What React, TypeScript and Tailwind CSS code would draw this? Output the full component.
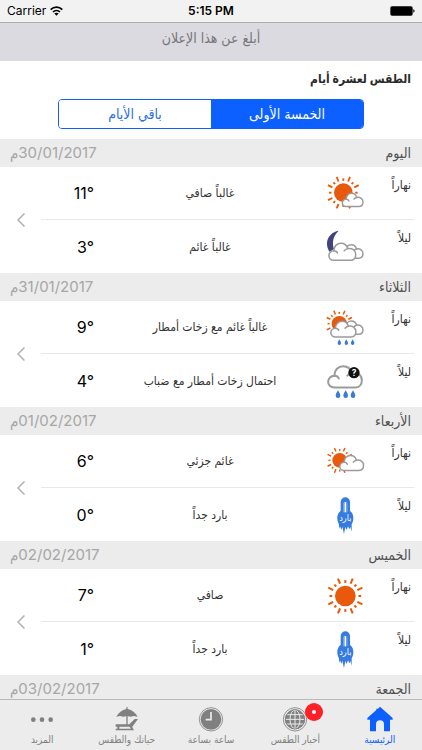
import type { ReactNode } from "react"

type IconName = "partly" | "nightCloud" | "sunRain" | "fogRain" | "sunCloud" | "cold" | "sunny"

type Period = { label: string; icon: IconName; text: string; temp: string }

const days: { name: string; date: string; periods: Period[] }[] = [
  {
    name: "اليوم",
    date: "30/01/2017م",
    periods: [
      { label: "نهاراً", icon: "partly", text: "غالباً صافي", temp: "11°" },
      { label: "ليلاً", icon: "nightCloud", text: "غالباً غائم", temp: "3°" },
    ],
  },
  {
    name: "الثلاثاء",
    date: "31/01/2017م",
    periods: [
      { label: "نهاراً", icon: "sunRain", text: "غالباً غائم مع زخات أمطار", temp: "9°" },
      { label: "ليلاً", icon: "fogRain", text: "احتمال زخات أمطار مع ضباب", temp: "4°" },
    ],
  },
  {
    name: "الأربعاء",
    date: "01/02/2017م",
    periods: [
      { label: "نهاراً", icon: "sunCloud", text: "غائم جزئي", temp: "6°" },
      { label: "ليلاً", icon: "cold", text: "بارد جداً", temp: "0°" },
    ],
  },
  {
    name: "الخميس",
    date: "02/02/2017م",
    periods: [
      { label: "نهاراً", icon: "sunny", text: "صافي", temp: "7°" },
      { label: "ليلاً", icon: "cold", text: "بارد جداً", temp: "1°" },
    ],
  },
  { name: "الجمعة", date: "03/02/2017م", periods: [] },
]

function Sun({ x, y, r }: { x: number; y: number; r: number }) {
  return (
    <g transform={`translate(${x} ${y}) scale(${r / 30})`} stroke="#e8590c" strokeWidth="6">
      <circle r="30" fill="#e8590c" stroke="none" />
      {/* long rays */}
      {[26, 67, 113, 154, 206, 247, 293, 334].map((a) => (
        <path key={a} d="M39 0H55" transform={`rotate(${a})`} />
      ))}
      {/* short rays */}
      {[0, 46, 90, 134, 180, 226, 270, 314].map((a) => (
        <path key={a} d="M38 0H46" transform={`rotate(${a})`} />
      ))}
    </g>
  )
}

function Cloud({ x, y, w, stroke = 4.5 }: { x: number; y: number; w: number; stroke?: number }) {
  const s = w / 64
  return (
    <g
      transform={`translate(${x} ${y}) scale(${s})`}
      fill="#fff"
      stroke="#9b9b9b"
      strokeWidth={stroke / s}
      strokeLinecap="round"
    >
      <path d="M13 40C6 40 2 35 2 30C2 24 7 19 13 19C13 9 20 2 29 2C37 2 42 7 44 14C54 12 62 18 62 27C62 35 57 40 50 40Z" />
      <path d="M13 19C17 19 20 21 21 24M44 14C40 15 38 16 36 19" fill="none" />
    </g>
  )
}

function Drops({ xs, y, size }: { xs: number[]; y: number; size: number }) {
  return (
    <>
      {xs.map((x) => (
        <path
          key={x}
          transform={`translate(${x} ${y}) scale(${size / 20})`}
          d="M0 0C3 6 6 9 6 14A6 6 0 0 1 -6 14C-6 9 -3 6 0 0Z"
          fill="#3a7bd5"
        />
      ))}
    </>
  )
}

const drawings: Record<IconName, ReactNode> = {
  partly: (
    <>
      <Sun x={52} y={53} r={28} />
      <Cloud x={47} y={53} w={66} />
    </>
  ),
  nightCloud: (
    <>
      <path d="M38 5C20 8 3 22 3 44C3 54 6 60 10 68L24 60C18 42 20 22 38 5Z" fill="#43437c" />
      <Cloud x={45} y={45} w={68} />
      <Cloud x={6} y={40} w={86} />
    </>
  ),
  sunRain: (
    <>
      <Sun x={40} y={44} r={23} />
      <Cloud x={46} y={34} w={67} />
      <Cloud x={12} y={34} w={80} />
      <Drops xs={[40, 61, 80]} y={91} size={17} />
    </>
  ),
  fogRain: (
    <>
      <Cloud x={3} y={6} w={108} stroke={6} />
      <circle cx="84" cy="29" r="17" fill="#111" />
      <text x="84" y="38" textAnchor="middle" fontSize="25" fontWeight="bold" fill="#fff">?</text>
      <Drops xs={[36, 59, 81]} y={82} size={23} />
    </>
  ),
  sunCloud: (
    <>
      <Sun x={41} y={52} r={22} />
      <Cloud x={39} y={35} w={76} />
    </>
  ),
  cold: (
    <>
      <path
        d="M44 15A14 14 0 0 1 72 15V42C79 47 82 54 82 63C82 71 80 77 77 82V104L73 90L70 97L66 88L62 99L58 90L54 111L49 90L46 98L42 88L39 96V82C36 77 34 71 34 63C34 54 37 47 44 42Z"
        fill="#357be0"
      />
      <path d="M58 15V46" stroke="#fff" strokeWidth="5" />
      <path d="M53 17V46M63 17V46" stroke="#9fc3f5" strokeWidth="2" />
      <text x="58" y="72" textAnchor="middle" fontSize="27" fill="#fff">بارد</text>
    </>
  ),
  sunny: <Sun x={58} y={57} r={31} />,
}

function WeatherIcon({ name }: { name: IconName }) {
  return (
    <svg viewBox="0 0 114 108" className="h-9 w-[38px] shrink-0 overflow-visible" aria-hidden="true">
      {drawings[name]}
    </svg>
  )
}

function StatusBar() {
  return (
    <div dir="ltr" className="grid h-[23px] shrink-0 grid-cols-3 items-center border-b border-[#adadb0] bg-[#f3f2f2] px-[7px] font-['Inter',sans-serif] text-xs text-black">
      <div className="flex items-center gap-1">
        <span>Carrier</span>
        <svg viewBox="0 0 39 30" className="h-[10px] w-[13px]" fill="none" stroke="#000" strokeWidth="5">
          <path d="M2 11C12 1 27 1 37 11" />
          <path d="M9 18C15 12 24 12 30 18" />
          <path d="M19.500 29L13 22.500C17 19 22 19 26 22.500Z" fill="#000" stroke="none" />
        </svg>
      </div>
      <span className="text-center font-semibold">5:15 PM</span>
      <svg viewBox="0 0 75 30" className="h-[10px] w-[25px] justify-self-end">
        <rect x="1" y="1" width="67" height="28" rx="5" />
        <path d="M70 10C75 11 75 19 70 20Z" />
      </svg>
    </div>
  )
}

function DayBlock({ name, date, periods }: (typeof days)[number]) {
  return (
    <section>
      <header className="flex h-7 items-center justify-between bg-[#ececec] pr-[11px] pl-[10px]">
        <h2 className="text-sm leading-5 text-[#505050]">{name}</h2>
        <span className="text-[15px] leading-5 text-[#a6a6a6]">{date}</span>
      </header>

      {periods.length > 0 && (
        <div className="flex">
          <div className="flex-1">
            {periods.map((p, i) => (
              <div key={p.label}>
                {i > 0 && <div className="mr-2 h-px bg-[#e8e8e8]" />}
                <div className={"flex items-center pr-[11px] " + (i > 0 ? "h-[53px]" : "h-[52px]")}>
                  <span className="w-[47px] self-start pt-[10px] text-xs text-[#333]">{p.label}</span>
                  <WeatherIcon name={p.icon} />
                  <span className="flex-1 text-center text-xs text-[#333]">{p.text}</span>
                  <span dir="ltr" className="w-[53px] text-right text-base text-black">{p.temp}</span>
                </div>
              </div>
            ))}
          </div>
          <a href="#" aria-label={`تفاصيل ${name}`} className="flex w-[41px] items-center justify-center">
            <svg viewBox="0 0 8 14" className="h-[14px] w-2" fill="none" stroke="#b0b0b4" strokeWidth="1.500">
              <path d="M7.500 0.500L1 7L7.500 13.500" />
            </svg>
          </a>
        </div>
      )}
    </section>
  )
}

const tabs: { label: string; active?: boolean; badge?: boolean; icon: ReactNode }[] = [
  {
    label: "الرئيسية",
    active: true,
    icon: (
      <path
        d="M39 2L77 36V41H69V76H51V55A12 12 0 0 0 27 55V76H9V41H1V36L28 12V8H33V8Z"
        fill="currentColor"
      />
    ),
  },
  {
    label: "أخبار الطقس",
    badge: true,
    icon: (
      <g fill="none" stroke="currentColor" strokeWidth="3">
        <circle cx="39" cy="40" r="35" strokeWidth="2.500" />
        <circle cx="39" cy="40" r="28" fill="currentColor" />
        <g stroke="#ececec" strokeWidth="3">
          <path d="M39 12V68M11 40H67M15 26H63M15 54H63" />
          <ellipse cx="39" cy="40" rx="15" ry="28" />
        </g>
        <circle cx="39" cy="40" r="29" />
      </g>
    ),
  },
  {
    label: "ساعة بساعة",
    icon: (
      <>
        <circle cx="39" cy="40" r="35" fill="none" stroke="currentColor" strokeWidth="2.500" />
        <circle cx="39" cy="40" r="31" fill="currentColor" />
        <path d="M39 18V41H23" fill="none" stroke="#ececec" strokeWidth="5" />
      </>
    ),
  },
  {
    label: "حياتك والطقس",
    icon: (
      <g fill="currentColor">
        <path d="M37 4H41V9C54 12 65 21 71 32L60 30L50 32L39 30L28 32L18 30L7 32C13 21 24 12 37 9Z" />
        <path d="M37 28H41V57H37Z" />
        <path d="M5 55H46L62 39H72L55 62H5Z" />
        <path d="M10 60H16V70H10ZM46 60H53L60 73H53ZM5 68H57V73H5Z" />
      </g>
    ),
  },
  {
    label: "المزيد",
    icon: (
      <g fill="currentColor">
        <circle cx="13" cy="41" r="7" />
        <circle cx="39" cy="41" r="7" />
        <circle cx="65" cy="41" r="7" />
      </g>
    ),
  },
]

function TabBar() {
  return (
    <nav className="grid h-[51px] shrink-0 grid-cols-5 border-t border-[#b9b9b9] bg-[#ececec]">
      {tabs.map((tab) => (
        <a
          key={tab.label}
          href="#"
          aria-current={tab.active ? "page" : undefined}
          className={
            "flex flex-col items-center pt-[6px] " + (tab.active ? "text-[#0b60ff]" : "text-[#808080]")
          }
        >
          <span className="relative">
            <svg viewBox="0 0 78 78" className="h-[26px] w-[26px]" aria-hidden="true">
              {tab.icon}
            </svg>
            {tab.badge && (
              <span className="absolute -top-[3px] -right-[15px] flex h-[18px] w-[18px] items-center justify-center rounded-full bg-[#ff1f26]">
                <span className="h-1 w-1 rounded-full bg-white" />
              </span>
            )}
          </span>
          <span className="text-[10px] leading-[14px] whitespace-nowrap">{tab.label}</span>
        </a>
      ))}
    </nav>
  )
}

export default function App() {
  return (
    <div
      dir="rtl"
      lang="ar"
      className="flex h-screen flex-col overflow-hidden bg-white font-['Inter','DejaVu_Sans_Condensed','DejaVu_Sans',sans-serif]"
    >
      <StatusBar />

      <button type="button" className="flex h-[38px] w-full shrink-0 justify-center bg-[#dbdae0] pt-[5px] text-sm leading-5 text-[#77767b]">
        أبلغ عن هذا الإعلان
      </button>

      <main className="min-h-0 flex-1 overflow-hidden">
        <h1 className="px-[11px] pt-2 text-xs leading-5 font-bold text-[#2b2b2b]">الطقس لعشرة أيام</h1>

        {/* مبدّل الأيام */}
        <div className="mx-[58px] my-[10px] grid h-[30px] grid-cols-2 overflow-hidden rounded border border-[#0b60ff] text-sm">
          <button type="button" aria-pressed="true" className="bg-[#0b60ff] text-white">
            الخمسة الأولى
          </button>
          <button type="button" aria-pressed="false" className="bg-white text-[#2a6fe0]">
            باقي الأيام
          </button>
        </div>

        {days.map((day) => (
          <DayBlock key={day.date} {...day} />
        ))}
      </main>

      <TabBar />
    </div>
  )
}
